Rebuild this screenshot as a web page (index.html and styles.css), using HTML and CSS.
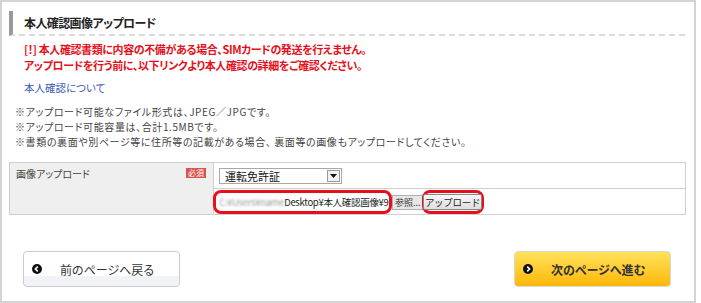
FILE: index.html
```html
<!DOCTYPE html>
<html lang="ja">
<head>
    <meta charset="UTF-8">
    <title>本人確認画像アップロード</title>
    <link rel="stylesheet" href="styles.css">
</head>
<body>
    <div class="frame">
        <h2 class="heading">本人確認画像アップロード</h2>
        <p class="warning">[！] 本人確認書類に内容の不備がある場合、SIMカードの発送を行えません。<br>アップロードを行う前に、以下リンクより本人確認の詳細をご確認ください。</p>
        <p class="link-row"><a href="#">本人確認について</a></p>
        <ul class="notes">
            <li>※アップロード可能なファイル形式は、JPEG／JPGです。</li>
            <li>※アップロード可能容量は、合計1.5MBです。</li>
            <li>※書類の裏面や別ページ等に住所等の記載がある場合、 裏面等の画像もアップロードしてください。</li>
        </ul>
        <table class="form-table">
            <tr>
                <th rowspan="2">
                    <div class="th-inner">
                        <span>画像アップロード</span>
                        <span class="required">必須</span>
                    </div>
                </th>
                <td class="select-cell">
                    <div class="select-box">
                        <span>運転免許証</span>
                        <span class="select-arrow">
                            <svg width="7" height="4" viewBox="0 0 7 4"><path d="M0 0h7L3.5 4z" fill="#111"/></svg>
                        </span>
                    </div>
                </td>
            </tr>
            <tr>
                <td class="file-cell">
                    <div class="file-row">
                        <div class="mark file-mark">
                            <div class="file-path"><span class="blurred">C:¥Users¥name</span>Desktop¥本人確認画像¥9</div>
                        </div>
                        <button class="browse">参照...</button>
                        <div class="mark upload-mark">
                            <button class="upload">アップロード</button>
                        </div>
                    </div>
                </td>
            </tr>
        </table>
        <div class="nav">
            <a href="#" class="nav-btn back">
                <svg class="nav-icon" width="10" height="10" viewBox="0 0 10 10"><circle cx="5" cy="5" r="5" fill="#111"/><path d="M5.8 2.6L3.4 5l2.4 2.4" stroke="#fff" stroke-width="1.6" fill="none"/></svg>
                <span>前のページへ戻る</span>
            </a>
            <a href="#" class="nav-btn next">
                <svg class="nav-icon" width="10" height="10" viewBox="0 0 10 10"><circle cx="5" cy="5" r="5" fill="#111"/><path d="M4.2 2.6L6.6 5 4.2 7.4" stroke="#fff" stroke-width="1.6" fill="none"/></svg>
                <span>次のページへ進む</span>
            </a>
        </div>
    </div>
</body>
</html>
```

FILE: styles.css
```css
html, body {
    margin: 0;
    padding: 0;
    background: #fff;
}
body {
    font-family: "Noto Sans CJK JP", "Noto Sans", sans-serif;
    color: #333;
    font-feature-settings: "palt";
}
.frame {
    box-sizing: border-box;
    width: 696px;
    height: 303px;
    border: 2px solid #d4d4d4;
    padding: 9px 9px 0 7px;
}
.heading {
    margin: 0;
    font-size: 12px;
    font-weight: bold;
    line-height: 23px;
    color: #222;
    padding-left: 11px;
    border-left: 4px solid #9a9a9a;
    border-bottom: 2px dashed #dcdcdc;
    letter-spacing: -0.6px;
}
.warning {
    margin: 5px 0 0 0;
    padding-left: 15px;
    font-size: 11px;
    font-weight: bold;
    line-height: 16px;
    color: #e5101b;
    letter-spacing: -0.4px;
}
.link-row {
    margin: 7px 0 0 0;
    padding-left: 15px;
    font-size: 10.5px;
    line-height: 16px;
}
.link-row a {
    color: #3a5bb8;
    text-decoration: none;
}
.notes {
    list-style: none;
    margin: 8px 0 0 0;
    padding-left: 6px;
    font-size: 10px;
    line-height: 15px;
    color: #444;
    letter-spacing: 0.6px;
}
.form-table {
    margin-top: 13px;
    width: 677px;
    border-collapse: collapse;
    font-size: 10px;
}
.form-table th,
.form-table td {
    border: 1px solid #cfcfcf;
    padding: 0;
    height: 25px;
}
.form-table th {
    width: 203px;
    background: #efefef;
    vertical-align: top;
    font-weight: normal;
    text-align: left;
}
.th-inner {
    display: flex;
    justify-content: space-between;
    padding: 4px 7px 0 6px;
    line-height: 14px;
    color: #444;
}
.required {
    margin-top: 1px;
    background: #d9534f;
    color: #fff;
    font-size: 8px;
    line-height: 10px;
    padding: 0 2px;
    height: 10px;
}
.select-cell {
    padding: 0 0 0 5px !important;
}
.select-box {
    box-sizing: border-box;
    width: 123px;
    height: 16px;
    border: 1px solid #a8a8a8;
    display: flex;
    align-items: center;
    justify-content: space-between;
    padding: 0 1px 0 5px;
    font-size: 11px;
    color: #111;
}
.select-arrow {
    box-sizing: border-box;
    width: 13px;
    height: 12px;
    border: 1px solid #999;
    background: #f2f2f2;
    display: flex;
    align-items: center;
    justify-content: center;
}
.file-cell {
    vertical-align: top;
}
.file-row {
    display: flex;
    align-items: center;
    margin: 1px 0 0 -1px;
}
.mark {
    box-sizing: border-box;
    height: 24px;
    border: 3px solid #e5101b;
    border-radius: 8px;
    display: flex;
    align-items: center;
}
.file-mark {
    width: 179px;
    padding-left: 3px;
    overflow: hidden;
}
.file-path {
    white-space: nowrap;
    font-size: 9.5px;
    color: #222;
    letter-spacing: -0.3px;
}
.blurred {
    color: #999;
    filter: blur(1.2px);
}
.browse {
    height: 15px;
    padding: 0 2px;
    font-family: inherit;
    font-size: 9px;
    line-height: 13px;
    white-space: nowrap;
    border: 1px solid #b0b0b0;
    background: #e6e6e6;
    color: #333;
}
.upload-mark {
    margin-left: -2px;
    width: 62px;
    justify-content: center;
}
.upload {
    height: 16px;
    padding: 0 1px;
    font-family: inherit;
    font-size: 9.5px;
    line-height: 14px;
    white-space: nowrap;
    letter-spacing: -0.3px;
    border: 1px solid #8a8a8a;
    border-radius: 2px;
    background: linear-gradient(#f8f8f8, #dedede);
    color: #222;
}
.nav {
    display: flex;
    justify-content: space-between;
    margin-top: 36px;
    padding: 0 14px;
}
.nav-btn {
    box-sizing: border-box;
    width: 157px;
    height: 36px;
    border-radius: 4px;
    display: flex;
    align-items: center;
    padding-left: 8px;
    text-decoration: none;
    color: #333;
    font-size: 12px;
}
.nav-btn span {
    margin-left: 18px;
}
.back {
    border: 1px solid #cccccc;
    background: linear-gradient(#fff 0%, #fff 70%, #f1f3f7 72%, #f1f3f7 100%);
}
.next {
    border: 1px solid #d8d8d8;
    background: linear-gradient(#ffe25a, #ffb70a);
    font-weight: bold;
    color: #333;
}
.nav-icon {
    flex: none;
}
```
